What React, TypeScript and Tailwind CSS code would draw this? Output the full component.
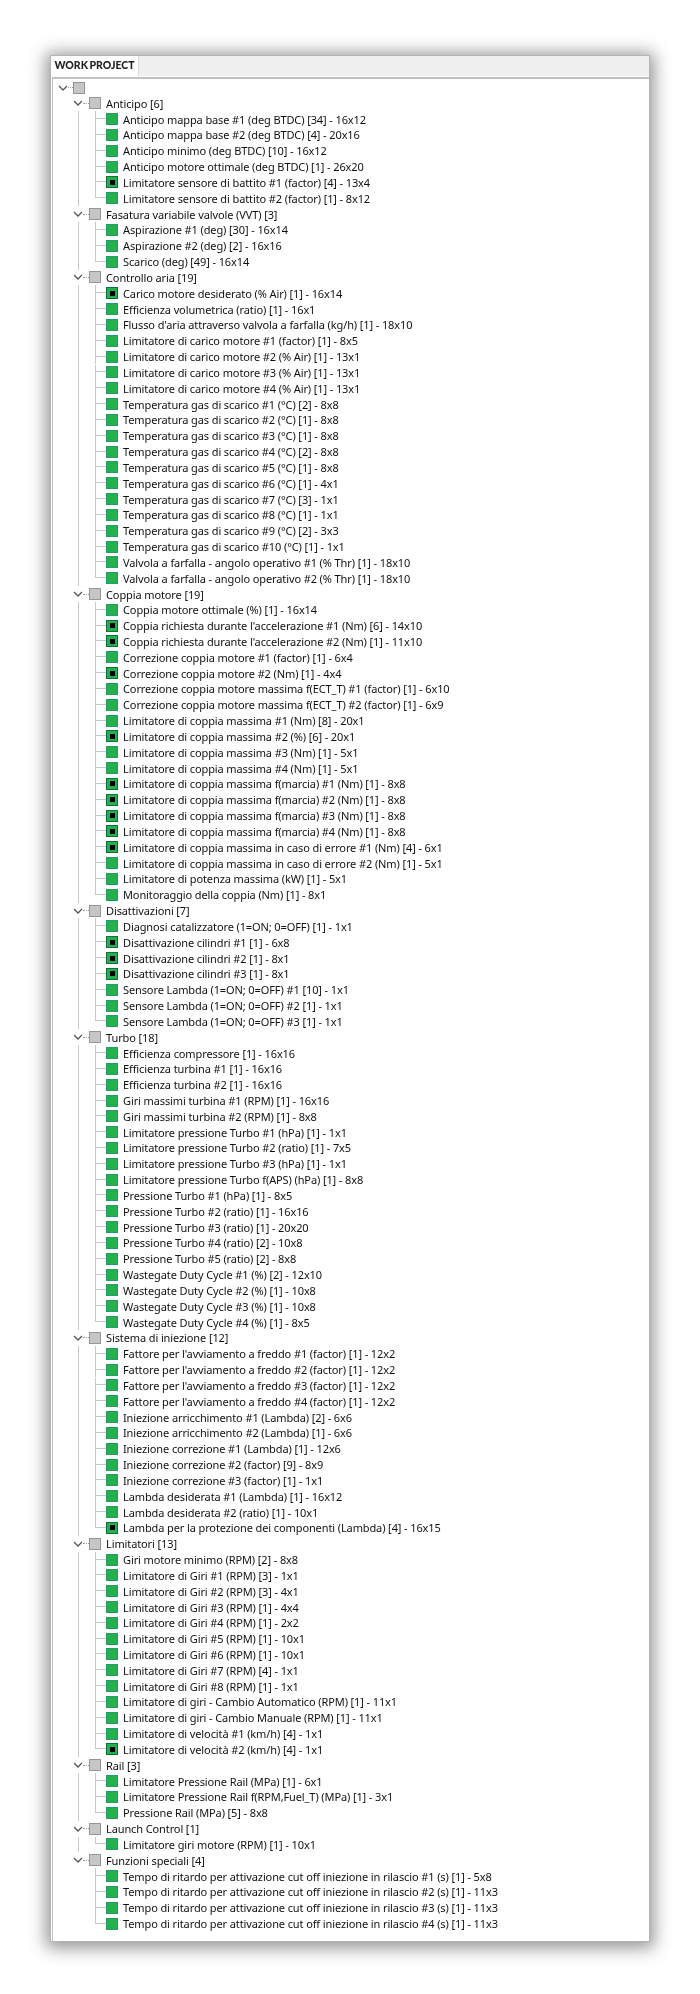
const groups: { title: string; items: string[] }[] = [
  {
    title: "Anticipo [6]",
    items: [
      "Anticipo mappa base #1 (deg BTDC) [34] - 16x12",
      "Anticipo mappa base #2 (deg BTDC) [4] - 20x16",
      "Anticipo minimo (deg BTDC) [10] - 16x12",
      "Anticipo motore ottimale (deg BTDC) [1] - 26x20",
      "!Limitatore sensore di battito #1 (factor) [4] - 13x4",
      "Limitatore sensore di battito #2 (factor) [1] - 8x12",
    ],
  },
  {
    title: "Fasatura variabile valvole (VVT) [3]",
    items: [
      "Aspirazione #1 (deg) [30] - 16x14",
      "Aspirazione #2 (deg) [2] - 16x16",
      "Scarico (deg) [49] - 16x14",
    ],
  },
  {
    title: "Controllo aria [19]",
    items: [
      "!Carico motore desiderato (% Air) [1] - 16x14",
      "Efficienza volumetrica (ratio) [1] - 16x1",
      "Flusso d'aria attraverso valvola a farfalla (kg/h) [1] - 18x10",
      "Limitatore di carico motore #1 (factor) [1] - 8x5",
      "Limitatore di carico motore #2 (% Air) [1] - 13x1",
      "Limitatore di carico motore #3 (% Air) [1] - 13x1",
      "Limitatore di carico motore #4 (% Air) [1] - 13x1",
      "Temperatura gas di scarico #1 (°C) [2] - 8x8",
      "Temperatura gas di scarico #2 (°C) [1] - 8x8",
      "Temperatura gas di scarico #3 (°C) [1] - 8x8",
      "Temperatura gas di scarico #4 (°C) [2] - 8x8",
      "Temperatura gas di scarico #5 (°C) [1] - 8x8",
      "Temperatura gas di scarico #6 (°C) [1] - 4x1",
      "Temperatura gas di scarico #7 (°C) [3] - 1x1",
      "Temperatura gas di scarico #8 (°C) [1] - 1x1",
      "Temperatura gas di scarico #9 (°C) [2] - 3x3",
      "Temperatura gas di scarico #10 (°C) [1] - 1x1",
      "Valvola a farfalla - angolo operativo #1 (% Thr) [1] - 18x10",
      "Valvola a farfalla - angolo operativo #2 (% Thr) [1] - 18x10",
    ],
  },
  {
    title: "Coppia motore [19]",
    items: [
      "Coppia motore ottimale (%) [1] - 16x14",
      "!Coppia richiesta durante l'accelerazione #1 (Nm) [6] - 14x10",
      "!Coppia richiesta durante l'accelerazione #2 (Nm) [1] - 11x10",
      "Correzione coppia motore #1 (factor) [1] - 6x4",
      "!Correzione coppia motore #2 (Nm) [1] - 4x4",
      "Correzione coppia motore massima f(ECT_T) #1 (factor) [1] - 6x10",
      "Correzione coppia motore massima f(ECT_T) #2 (factor) [1] - 6x9",
      "Limitatore di coppia massima #1 (Nm) [8] - 20x1",
      "!Limitatore di coppia massima #2 (%) [6] - 20x1",
      "Limitatore di coppia massima #3 (Nm) [1] - 5x1",
      "Limitatore di coppia massima #4 (Nm) [1] - 5x1",
      "!Limitatore di coppia massima f(marcia) #1 (Nm) [1] - 8x8",
      "!Limitatore di coppia massima f(marcia) #2 (Nm) [1] - 8x8",
      "!Limitatore di coppia massima f(marcia) #3 (Nm) [1] - 8x8",
      "!Limitatore di coppia massima f(marcia) #4 (Nm) [1] - 8x8",
      "!Limitatore di coppia massima in caso di errore #1 (Nm) [4] - 6x1",
      "Limitatore di coppia massima in caso di errore #2 (Nm) [1] - 5x1",
      "Limitatore di potenza massima (kW) [1] - 5x1",
      "Monitoraggio della coppia (Nm) [1] - 8x1",
    ],
  },
  {
    title: "Disattivazioni [7]",
    items: [
      "Diagnosi catalizzatore (1=ON; 0=OFF) [1] - 1x1",
      "!Disattivazione cilindri #1 [1] - 6x8",
      "!Disattivazione cilindri #2 [1] - 8x1",
      "!Disattivazione cilindri #3 [1] - 8x1",
      "Sensore Lambda (1=ON; 0=OFF) #1 [10] - 1x1",
      "Sensore Lambda (1=ON; 0=OFF) #2 [1] - 1x1",
      "Sensore Lambda (1=ON; 0=OFF) #3 [1] - 1x1",
    ],
  },
  {
    title: "Turbo [18]",
    items: [
      "Efficienza compressore [1] - 16x16",
      "Efficienza turbina #1 [1] - 16x16",
      "Efficienza turbina #2 [1] - 16x16",
      "Giri massimi turbina #1 (RPM) [1] - 16x16",
      "Giri massimi turbina #2 (RPM) [1] - 8x8",
      "Limitatore pressione Turbo #1 (hPa) [1] - 1x1",
      "Limitatore pressione Turbo #2 (ratio) [1] - 7x5",
      "Limitatore pressione Turbo #3 (hPa) [1] - 1x1",
      "Limitatore pressione Turbo f(APS) (hPa) [1] - 8x8",
      "Pressione Turbo #1 (hPa) [1] - 8x5",
      "Pressione Turbo #2 (ratio) [1] - 16x16",
      "Pressione Turbo #3 (ratio) [1] - 20x20",
      "Pressione Turbo #4 (ratio) [2] - 10x8",
      "Pressione Turbo #5 (ratio) [2] - 8x8",
      "Wastegate Duty Cycle #1 (%) [2] - 12x10",
      "Wastegate Duty Cycle #2 (%) [1] - 10x8",
      "Wastegate Duty Cycle #3 (%) [1] - 10x8",
      "Wastegate Duty Cycle #4 (%) [1] - 8x5",
    ],
  },
  {
    title: "Sistema di iniezione [12]",
    items: [
      "Fattore per l'avviamento a freddo #1 (factor) [1] - 12x2",
      "Fattore per l'avviamento a freddo #2 (factor) [1] - 12x2",
      "Fattore per l'avviamento a freddo #3 (factor) [1] - 12x2",
      "Fattore per l'avviamento a freddo #4 (factor) [1] - 12x2",
      "Iniezione arricchimento #1 (Lambda) [2] - 6x6",
      "Iniezione arricchimento #2 (Lambda) [1] - 6x6",
      "Iniezione correzione #1 (Lambda) [1] - 12x6",
      "Iniezione correzione #2 (factor) [9] - 8x9",
      "Iniezione correzione #3 (factor) [1] - 1x1",
      "Lambda desiderata #1 (Lambda) [1] - 16x12",
      "Lambda desiderata #2 (ratio) [1] - 10x1",
      "!Lambda per la protezione dei componenti (Lambda) [4] - 16x15",
    ],
  },
  {
    title: "Limitatori [13]",
    items: [
      "Giri motore minimo (RPM) [2] - 8x8",
      "Limitatore di Giri #1 (RPM) [3] - 1x1",
      "Limitatore di Giri #2 (RPM) [3] - 4x1",
      "Limitatore di Giri #3 (RPM) [1] - 4x4",
      "Limitatore di Giri #4 (RPM) [1] - 2x2",
      "Limitatore di Giri #5 (RPM) [1] - 10x1",
      "Limitatore di Giri #6 (RPM) [1] - 10x1",
      "Limitatore di Giri #7 (RPM) [4] - 1x1",
      "Limitatore di Giri #8 (RPM) [1] - 1x1",
      "Limitatore di giri - Cambio Automatico (RPM) [1] - 11x1",
      "Limitatore di giri - Cambio Manuale (RPM) [1] - 11x1",
      "Limitatore di velocità #1 (km/h) [4] - 1x1",
      "!Limitatore di velocità #2 (km/h) [4] - 1x1",
    ],
  },
  {
    title: "Rail [3]",
    items: [
      "Limitatore Pressione Rail (MPa) [1] - 6x1",
      "Limitatore Pressione Rail f(RPM,Fuel_T) (MPa) [1] - 3x1",
      "Pressione Rail (MPa) [5] - 8x8",
    ],
  },
  {
    title: "Launch Control [1]",
    items: ["Limitatore giri motore (RPM) [1] - 10x1"],
  },
  {
    title: "Funzioni speciali [4]",
    items: [
      "Tempo di ritardo per attivazione cut off iniezione in rilascio #1 (s) [1] - 5x8",
      "Tempo di ritardo per attivazione cut off iniezione in rilascio #2 (s) [1] - 11x3",
      "Tempo di ritardo per attivazione cut off iniezione in rilascio #3 (s) [1] - 11x3",
      "Tempo di ritardo per attivazione cut off iniezione in rilascio #4 (s) [1] - 11x3",
    ],
  },
];

function Chevron() {
  return (
    <svg width="10" height="6" viewBox="0 0 10 6" className="shrink-0">
      <path d="M1 1l4 4 4-4" fill="none" stroke="#555" strokeWidth="1.3" />
    </svg>
  );
}

function GrayBox() {
  return <div className="w-3 h-3 shrink-0 bg-[#c6c6c6] border border-[#969696]" />;
}

function ItemRow({ label, last, lastGroup }: { label: string; last: boolean; lastGroup: boolean }) {
  const marked = label.startsWith("!");
  return (
    <div className="flex items-stretch h-[15.84px] pl-[25px]">
      {/* guida del gruppo */}
      <div className={`w-[17px] shrink-0 ${lastGroup ? "" : "border-l border-[#c8c8c8]"}`} />
      {/* guida dell'elemento */}
      <div className="w-[11px] shrink-0 flex flex-col">
        <div className="h-1/2 border-l border-b border-[#c8c8c8]" />
        {!last && <div className="h-1/2 border-l border-[#c8c8c8]" />}
      </div>
      <div className="flex items-center">
        <div
          className={`w-3 h-3 shrink-0 flex items-center justify-center bg-[#22b14c] border ${
            marked ? "border-[#0b6f38]" : "border-[#2a9a6a]"
          }`}
        >
          {marked && <div className="w-[5px] h-[5px] bg-black" />}
        </div>
        <span className="ml-[5px] whitespace-nowrap">{marked ? label.slice(1) : label}</span>
      </div>
    </div>
  );
}

function Group({ title, items, lastGroup }: { title: string; items: string[]; lastGroup: boolean }) {
  return (
    <div>
      <div className="flex items-center h-[15.84px] pl-[20px]">
        <Chevron />
        <div className="w-[6px] shrink-0 border-b border-dotted border-[#9a9a9a]" />
        <GrayBox />
        <span className="ml-[5px] whitespace-nowrap">{title}</span>
      </div>
      {items.map((item, i) => (
        <ItemRow key={item} label={item} last={i === items.length - 1} lastGroup={lastGroup} />
      ))}
    </div>
  );
}

export default function App() {
  return (
    <div className="w-[700px] h-[1994px] bg-white overflow-hidden pt-[55px] pl-[50px]">
      <div className="w-[600px] h-[1887px] flex flex-col bg-white border border-[#b4b4b4] shadow-[0_2px_16px_4px_rgba(0,0,0,0.42)]">
        {/* barra delle schede */}
        <div className="h-[20px] shrink-0 bg-[#f0f0f0] flex">
          <div className="w-[88px] bg-white flex items-center justify-center border-r border-[#dcdcdc] font-['Lato',sans-serif] font-black text-[10.5px] [word-spacing:-1px] text-[#222] blur-[0.3px]">
            WORK PROJECT
          </div>
        </div>
        {/* albero */}
        <div className="flex-1 mt-[1px] ml-[1px] pt-[0.6px] border-t-2 border-l border-[#c0c0c0] font-['Noto_Sans',sans-serif] text-[11px] tracking-[-0.11px] leading-none text-[#111]">
          <div className="blur-[0.35px]">
            <div className="flex items-center h-[15.84px] pl-[5px]">
              <Chevron />
              <div className="w-[5px] shrink-0 border-b border-dotted border-[#9a9a9a]" />
              <GrayBox />
            </div>
            {groups.map((g, i) => (
              <Group key={g.title} title={g.title} items={g.items} lastGroup={i === groups.length - 1} />
            ))}
          </div>
        </div>
      </div>
    </div>
  );
}
